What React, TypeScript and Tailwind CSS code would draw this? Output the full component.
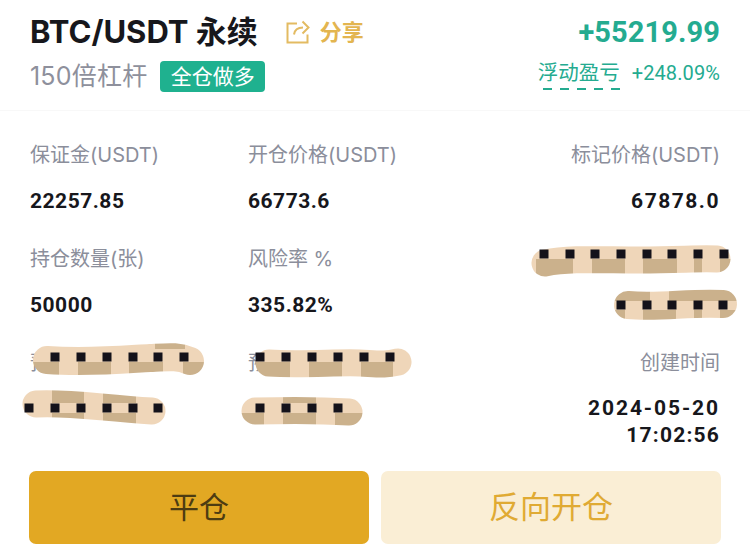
const fontStack = "font-['Inter','Noto_Sans_CJK_SC',sans-serif]";
const numFont = "font-['Roboto','Noto_Sans_CJK_SC',sans-serif]";

type Scribble = {
  id: string;
  d: string;
  width: number;
  box: [number, number, number, number];
  dark: [number, number, number, number][];
  dots: number[];
  dotY: number;
};

const scribbles: Scribble[] = [
  {
    id: "s1",
    d: "M47 360 C 90 363, 130 359, 150 358 S 178 356, 190 361",
    width: 28,
    box: [20, 335, 200, 50],
    dark: [[30, 362, 29, 20], [78, 362, 33, 20], [129, 362, 34, 20], [183, 362, 30, 20], [155, 340, 30, 9]],
    dots: [55, 81, 107, 133, 158, 184],
    dotY: 357,
  },
  {
    id: "s2",
    d: "M269 363 C 300 365, 340 362, 360 363 S 385 365, 398 362",
    width: 27,
    box: [245, 335, 180, 50],
    dark: [[250, 362, 40, 20], [309, 362, 33, 20], [361, 362, 32, 20]],
    dots: [260, 286, 312, 338, 364, 390],
    dotY: 357,
  },
  {
    id: "s3",
    d: "M36 404 C 70 402, 100 408, 152 411",
    width: 27,
    box: [15, 380, 160, 50],
    dark: [[52, 385, 32, 18], [103, 390, 33, 13], [52, 413, 32, 12], [103, 413, 33, 14]],
    dots: [29, 55, 81, 107, 133, 158],
    dotY: 408,
  },
  {
    id: "s4",
    d: "M255 411 C 290 410, 320 410, 349 412",
    width: 27,
    box: [235, 390, 135, 42],
    dark: [[236, 413, 28, 16], [283, 413, 33, 16], [335, 413, 30, 16], [283, 395, 33, 8]],
    dots: [260, 286, 312, 338],
    dotY: 408,
  },
  {
    id: "s5",
    d: "M545 263 C 570 258, 600 260, 640 260 S 700 258, 717 259",
    width: 27,
    box: [525, 240, 212, 42],
    dark: [[536, 259, 37, 20], [592, 259, 33, 20], [643, 259, 34, 20], [694, 259, 8, 20], [720, 259, 14, 20]],
    dots: [544, 570, 595, 621, 647, 672, 698, 724],
    dotY: 254,
  },
  {
    id: "s6",
    d: "M628 305 C 660 308, 690 302, 723 304",
    width: 28,
    box: [610, 285, 132, 38],
    dark: [[612, 288, 38, 13], [669, 288, 70, 13], [643, 310, 33, 12], [694, 310, 8, 12], [720, 310, 18, 12], [612, 310, 13, 12]],
    dots: [621, 647, 672, 698, 723],
    dotY: 305,
  },
];

function Redactions() {
  return (
    <svg className="absolute inset-0 h-[544px] w-[750px]" viewBox="0 0 750 544">
      {scribbles.map((s) => (
        <g key={s.id}>
          <mask id={s.id}>
            <path d={s.d} fill="none" stroke="#fff" strokeWidth={s.width} strokeLinecap="round" />
          </mask>
          <g mask={`url(#${s.id})`}>
            <rect x={s.box[0]} y={s.box[1]} width={s.box[2]} height={s.box[3]} fill="#efd6b9" />
            {s.dark.map((r, i) => (
              <rect key={i} x={r[0]} y={r[1]} width={r[2]} height={r[3]} fill="#cbb18c" />
            ))}
          </g>
          {s.dots.map((x) => (
            <rect key={x} x={x - 4.5} y={s.dotY - 4.5} width={9} height={9} fill="#14121a" />
          ))}
        </g>
      ))}
    </svg>
  );
}

function ShareIcon() {
  return (
    <svg width="24" height="24" viewBox="0 0 24 24" fill="none" stroke="#e3bb62" strokeWidth="2">
      <path d="M11 3.500H1.500V22.500h20v-8" />
      <path d="M8 14.500c.6-4.500 4-7 9-7" />
      <path d="M16.500 1.500l6 6-6 6" />
    </svg>
  );
}

function Stat({ label, value, right }: { label: string; value?: string; right?: boolean }) {
  return (
    <div className={right ? "flex h-[104px] flex-col items-end" : "flex h-[104px] flex-col"}>
      <div className="h-[46px] text-[20px] leading-[28px] text-[#8b8e9b]">{label}</div>
      {value && (
        <div
          className={
            right
              ? `${numFont} text-[21px] leading-[28px] font-bold tracking-[1.5px] text-[#17171c]`
              : `${numFont} text-[21px] leading-[28px] font-bold tracking-[0.5px] text-[#17171c]`
          }
        >
          {value}
        </div>
      )}
    </div>
  );
}

export default function App() {
  return (
    <div className={`relative h-[544px] w-[750px] overflow-hidden bg-white ${fontStack}`}>
      <div className="flex h-[111px] justify-between border-b border-[#f8f8f8] pt-[12px] pr-[30px] pl-[30px]">
        <div>
          <div className="flex h-[40px] items-center">
            <span className="text-[31px] leading-[40px] font-bold text-[#17171c]">BTC/USDT 永续</span>
            <span className="ml-[28px] flex items-center">
              <ShareIcon />
              <span className="ml-[10px] text-[22px] font-bold text-[#e3b550]">分享</span>
            </span>
          </div>
          <div className="mt-[9px] flex h-[31px] items-center">
            <span className="text-[25px] tracking-[0.2px] text-[#8e909c]">150倍杠杆</span>
            <span className="ml-[13px] flex h-[31px] w-[105px] items-center justify-center rounded-[4px] bg-[#1fb18f] text-[21px] text-white">
              全仓做多
            </span>
          </div>
        </div>
        <div className="flex flex-col items-end">
          <div className={`${numFont} h-[40px] text-[29px] leading-[40px] font-bold tracking-[0.1px] text-[#24ab90]`}>+55219.99</div>
          <div className="mt-[7px] flex h-[31px] items-start">
            <span className="flex flex-col">
              <span className="text-[20.500px] leading-[28px] text-[#24ab90]">浮动盈亏</span>
              <span className="mt-[1px] flex justify-end gap-[8px]">
                {[0, 1, 2, 3, 4].map((i) => (
                  <span key={i} className="h-[2px] w-[9px] bg-[#24ab90]" />
                ))}
              </span>
            </span>
            <span className={`${numFont} ml-[12px] text-[20px] leading-[28px] tracking-[0.1px] text-[#24ab90]`}>+248.09%</span>
          </div>
        </div>
      </div>

      <div className="mt-[30px] grid grid-cols-[218px_1fr_1fr] px-[30px]">
        <Stat label="保证金(USDT)" value="22257.85" />
        <Stat label="开仓价格(USDT)" value="66773.6" />
        <Stat label="标记价格(USDT)" value="67878.0" right />
        <Stat label="持仓数量(张)" value="50000" />
        <Stat label="风险率 %" value="335.82%" />
        <div />
        <Stat label="预" />
        <Stat label="预" />
        <div className="flex flex-col items-end text-right">
          <div className="h-[46px] text-[20px] leading-[28px] text-[#8b8e9b]">创建时间</div>
          <div className={`${numFont} text-[21px] leading-[27px] font-bold text-[#17171c]`}>
            <div className="tracking-[1.9px]">2024-05-20</div>
            <div className="tracking-[1.2px]">17:02:56</div>
          </div>
        </div>
      </div>

      <div className="absolute right-[29px] bottom-0 left-[29px] flex gap-[12px]">
        <button className="flex h-[73px] flex-1 items-center justify-center rounded-[7px] bg-[#e2a823] text-[30px] text-[#4d3c12]">
          平仓
        </button>
        <button className="flex h-[73px] flex-1 items-center justify-center rounded-[7px] bg-[#faeed5] text-[31px] text-[#e0aa33]">
          反向开仓
        </button>
      </div>

      <Redactions />
    </div>
  );
}
